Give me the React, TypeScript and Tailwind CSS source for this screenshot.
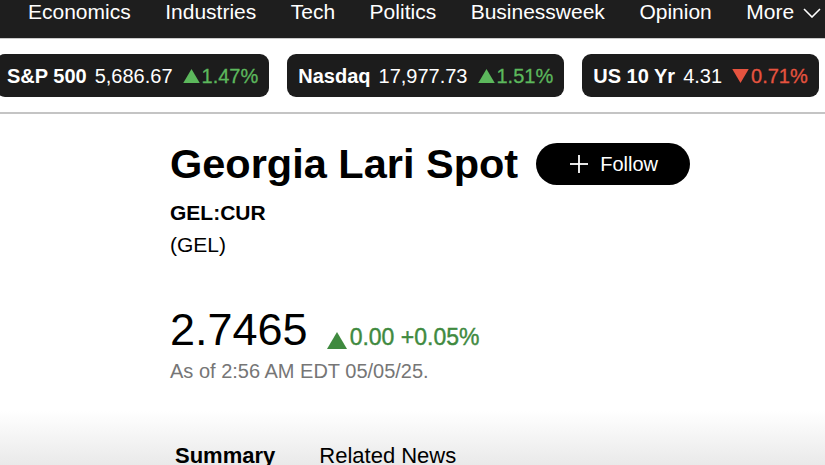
import React from "react";

const navItems = ["Economics", "Industries", "Tech", "Politics", "Businessweek", "Opinion"];

interface Ticker {
  name: string;
  value: string;
  change: string;
  up: boolean;
}

const tickers: Ticker[] = [
  { name: "S&P 500", value: "5,686.67", change: "1.47%", up: true },
  { name: "Nasdaq", value: "17,977.73", change: "1.51%", up: true },
  { name: "US 10 Yr", value: "4.31", change: "0.71%", up: false },
];

function Triangle({ up, className }: { up: boolean; className: string }) {
  return (
    <svg viewBox="0 0 20 17" className={className} fill="currentColor">
      {up ? <polygon points="10,0 20,17 0,17" /> : <polygon points="0,0 20,0 10,17" />}
    </svg>
  );
}

function TickerPill({ ticker }: { ticker: Ticker }) {
  return (
    <div className="flex h-[43px] shrink-0 items-center rounded-[9px] bg-[#1c1c1c] pl-[11px] pr-[11px] text-[20px] text-white">
      <span className="font-bold">{ticker.name}</span>
      <span className="ml-[8px]">{ticker.value}</span>
      <span
        className={
          "ml-[10px] flex items-center [-webkit-text-stroke:0.3px] " +
          (ticker.up ? "text-[#5cb85c]" : "text-[#e5533f]")
        }
      >
        <Triangle up={ticker.up} className="mr-[2px] h-[14px] w-[17px]" />
        {ticker.change}
      </span>
    </div>
  );
}

export default function App() {
  return (
    <div
      className="h-[465px] w-[825px] overflow-hidden bg-white"
      style={{ fontFamily: '"Liberation Sans", Arial, sans-serif' }}
    >
      <nav className="flex h-[39px] items-start gap-[34.5px] border-b border-[#c9c9c9] bg-[#1e1e1e] pl-[28px] text-[21px] leading-6 text-white">
        {navItems.map((item) => (
          <span key={item} className="whitespace-nowrap">
            {item}
          </span>
        ))}
        <span className="flex items-center gap-[9px] whitespace-nowrap">
          More
          <svg viewBox="0 0 18 10" className="mt-[2px] h-[10px] w-[18px]" fill="none" stroke="currentColor" strokeWidth="1.6">
            <polyline points="1,1 9,9 17,1" />
          </svg>
        </span>
      </nav>

      <div className="ml-[-4px] flex gap-[18px] border-b-2 border-[#c4c4c4] py-[15px]">
        {tickers.map((t) => (
          <TickerPill key={t.name} ticker={t} />
        ))}
      </div>

      <main className="pl-[170px] pt-[26px]">
        <div className="flex items-center gap-[18px]">
          <h1 className="text-[41.5px] font-bold leading-[48px] text-black">Georgia Lari Spot</h1>
          <button className="flex h-[42px] items-center gap-[12px] rounded-full bg-black pl-[34px] pr-[32px] text-[20px] text-white">
            <svg viewBox="0 0 18 18" className="h-[18px] w-[18px]" fill="none" stroke="currentColor" strokeWidth="1.8">
              <line x1="9" y1="0" x2="9" y2="18" />
              <line x1="0" y1="9" x2="18" y2="9" />
            </svg>
            Follow
          </button>
        </div>

        <div className="mt-[11px] text-[21px] font-bold leading-7 text-black">GEL:CUR</div>
        <div className="mt-[4px] text-[21px] leading-7 text-black">(GEL)</div>

        <div className="mt-[47px] flex items-baseline">
          <span className="text-[45px] leading-[48px] text-black">2.7465</span>
          <span className="ml-[19px] flex items-baseline text-[23px] text-[#3f8a3f] [-webkit-text-stroke:0.4px]">
            <Triangle up className="mr-[3px] h-[17px] w-[20px] self-center translate-y-[3px]" />
            0.00 +0.05%
          </span>
        </div>
        <div className="mt-[2px] text-[20px] leading-7 text-[#767676]">As of 2:56 AM EDT 05/05/25.</div>
      </main>

      <div className="mt-[16px] h-[65px] bg-gradient-to-b from-white from-[15%] to-[#e9e9e9] pl-[175px] pt-[41px]">
        <div className="flex gap-[44px] text-[22px] leading-7 text-black">
          <span className="font-bold">Summary</span>
          <span>Related News</span>
        </div>
      </div>
    </div>
  );
}
